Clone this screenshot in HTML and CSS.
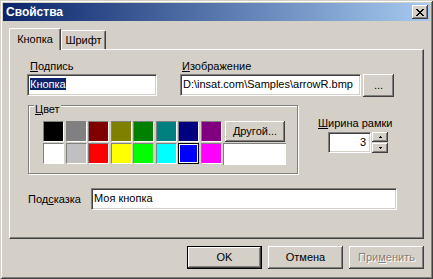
FILE: index.html
```html
<!DOCTYPE html>
<html lang="ru">
<head>
    <meta charset="UTF-8">
    <meta name="viewport" content="width=device-width, initial-scale=1.0">
    <title>Свойства</title>
    <link rel="stylesheet" href="styles.css">
</head>
<body>
  <div class="window">
    <div class="titlebar">
      <span class="title">Свойства</span>
      <div class="btn close-btn">
        <svg width="8" height="7" viewBox="0 0 8 7" shape-rendering="crispEdges">
          <path fill="#000" d="M0 0h2v1H0z M6 0h2v1H6z M1 1h2v1H1z M5 1h2v1H5z M2 2h4v1H2z M3 3h2v1H3z M2 4h4v1H2z M1 5h2v1H1z M5 5h2v1H5z M0 6h2v1H0z M6 6h2v1H6z"/>
        </svg>
      </div>
    </div>
    <div class="client">
      <div class="tabs">
        <div class="tab active">Кнопка</div>
        <div class="tab inactive">Шрифт</div>
      </div>
      <div class="panel">
        <div class="row-top">
          <div class="field caption-field">
            <div class="label"><u>П</u>одпись</div>
            <div class="edit w-caption"><span class="sel">Кнопка</span></div>
          </div>
          <div class="field image-field">
            <div class="label"><u>И</u>зображение</div>
            <div class="edit-line">
              <div class="edit w-image">D:\insat.com\Samples\arrowR.bmp</div>
              <div class="btn browse">...</div>
            </div>
          </div>
        </div>

        <div class="row-mid">
          <div class="group">
            <span class="group-title"><u>Ц</u>вет</span>
            <div class="palette">
              <div class="swatches">
                <div class="swatch c-black"></div>
                <div class="swatch c-gray"></div>
                <div class="swatch c-maroon"></div>
                <div class="swatch c-olive"></div>
                <div class="swatch c-green"></div>
                <div class="swatch c-teal"></div>
                <div class="swatch c-navy"></div>
                <div class="swatch c-purple"></div>
                <div class="swatch c-white"></div>
                <div class="swatch c-silver"></div>
                <div class="swatch c-red"></div>
                <div class="swatch c-yellow"></div>
                <div class="swatch c-lime"></div>
                <div class="swatch c-aqua"></div>
                <div class="swatch c-blue selected"></div>
                <div class="swatch c-fuchsia"></div>
              </div>
              <div class="palette-side">
                <div class="btn other">Другой...</div>
                <div class="custom"></div>
              </div>
            </div>
          </div>

          <div class="border-width">
            <div class="label"><u>Ш</u>ирина рамки</div>
            <div class="spin">
              <div class="edit spin-edit">3</div>
              <div class="spin-btns">
                <div class="btn spin-btn">
                  <svg width="3" height="2" viewBox="0 0 3 2" shape-rendering="crispEdges"><path fill="#000" d="M1 0h1v1h1v1H0V1h1z"/></svg>
                </div>
                <div class="btn spin-btn">
                  <svg width="3" height="2" viewBox="0 0 3 2" shape-rendering="crispEdges"><path fill="#000" d="M0 0h3v1H2v1H1V1H0z"/></svg>
                </div>
              </div>
            </div>
          </div>
        </div>

        <div class="row-hint">
          <div class="label hint-label">Под<u>с</u>казка</div>
          <div class="edit w-hint">Моя кнопка</div>
        </div>
      </div>

      <div class="actions">
        <div class="btn action default">OK</div>
        <div class="btn action">Отмена</div>
        <div class="btn action disabled">При<u>м</u>енить</div>
      </div>
    </div>
  </div>
</body>
</html>
```

FILE: styles.css
```css
*{
    box-sizing: border-box;
}
body{
    margin: 0;
    background: #d4d0c8;
    font: 11px/13px "Liberation Sans", Arial, sans-serif;
    color: #000;
}
.window{
    width: 433px;
    height: 279px;
    padding: 3px;
    background: #d4d0c8;
    box-shadow: inset 1px 1px #d4d0c8, inset -1px -1px #404040, inset 2px 2px #fff, inset -2px -2px #808080;
    display: flex;
    flex-direction: column;
}
.titlebar{
    height: 18px;
    flex: none;
    display: flex;
    justify-content: space-between;
    align-items: flex-start;
    padding: 0 2px 0 3px;
    background: linear-gradient(to right, #0a246a, #a6caf0);
}
.title{
    color: #fff;
    font-weight: bold;
    font-size: 12px;
    line-height: 18px;
}

/* classic raised button */
.btn{
    display: flex;
    align-items: center;
    justify-content: center;
    background: #d4d0c8;
    box-shadow: inset -1px -1px #404040, inset 1px 1px #fff, inset -2px -2px #808080, inset 2px 2px #d4d0c8;
}
.close-btn{
    width: 16px;
    height: 14px;
    margin-top: 2px;
}

.client{
    flex: 1;
    display: flex;
    flex-direction: column;
    padding: 7px 6px 0;
}

/* tabs */
.tabs{
    display: flex;
    align-items: flex-end;
    height: 21px;
}
.tab{
    height: 19px;
    padding-top: 3px;
    text-align: center;
    border-top: 1px solid #fff;
    border-left: 1px solid #fff;
    border-right: 1px solid #404040;
    border-radius: 2px 2px 0 0;
    box-shadow: inset -1px 0 #808080;
}
.tab.active{
    position: relative;
    z-index: 1;
    width: 52px;
    height: 22px;
    margin-bottom: -1px;
    padding-top: 4px;
    background: #d4d0c8;
}
.tab.inactive{
    width: 45px;
}

.panel{
    height: 190px;
    flex: none;
    padding: 10px 0 0 17px;
    border-top: 1px solid #fff;
    border-left: 1px solid #fff;
    border-right: 1px solid #404040;
    border-bottom: 1px solid #404040;
    box-shadow: inset -1px -1px #808080;
}

/* text fields */
.label{
    height: 13px;
    white-space: nowrap;
}
.caption-field .label{
    padding-left: 3px;
}
.image-field .label{
    padding-left: 2px;
}
.edit{
    height: 22px;
    margin-top: 1px;
    padding: 3px 2px 0;
    background: #fff;
    border: 1px solid;
    border-color: #808080 #fff #fff #808080;
    box-shadow: inset 1px 1px #404040, inset -1px -1px #d4d0c8;
    white-space: nowrap;
    overflow: hidden;
}
.sel{
    background: #0a246a;
    color: #fff;
}
.row-top{
    display: flex;
    gap: 23px;
}
.w-caption{
    width: 130px;
}
.edit-line{
    display: flex;
    gap: 2px;
}
.w-image{
    width: 181px;
}
.browse{
    width: 31px;
    height: 23px;
    margin-top: 1px;
}

/* colour group */
.row-mid{
    display: flex;
    margin: 8px 0 0 1px;
}
.group{
    position: relative;
    width: 270px;
    height: 69px;
    padding: 15px 0 0 14px;
    border: 1px solid #808080;
    box-shadow: inset 1px 1px #fff, 1px 1px #fff;
}
.group-title{
    position: absolute;
    top: -3px;
    left: 5px;
    padding: 0 1px;
    background: #d4d0c8;
}
.palette{
    display: flex;
}
.swatches{
    display: grid;
    grid-template-columns: repeat(8, 21px);
    grid-auto-rows: 21px;
    column-gap: 1.5px;
    row-gap: 1px;
}
.swatch{
    border: 1px solid;
    border-color: #808080 #fff #fff #808080;
}
.swatch.selected{
    border-color: #000;
    box-shadow: inset 0 0 0 1px #fff;
}
.c-black{ background: #000; }
.c-gray{ background: #808080; }
.c-maroon{ background: #800000; }
.c-olive{ background: #808000; }
.c-green{ background: #008000; }
.c-teal{ background: #008080; }
.c-navy{ background: #000080; }
.c-purple{ background: #800080; }
.c-white{ background: #fff; }
.c-silver{ background: #c0c0c0; }
.c-red{ background: #f00; }
.c-yellow{ background: #ff0; }
.c-lime{ background: #0f0; }
.c-aqua{ background: #0ff; }
.c-blue{ background: #00f; }
.c-fuchsia{ background: #f0f; }
.palette-side{
    display: flex;
    flex-direction: column;
    gap: 1px;
    margin-left: 1.5px;
}
.other{
    width: 60px;
    height: 21px;
    margin-left: 2px;
}
.custom{
    width: 63px;
    height: 22px;
    background: #fff;
    border-top: 1px solid #808080;
    border-left: 1px solid #808080;
}

/* border width spinner */
.border-width{
    margin-left: 20px;
    padding-top: 12px;
}
.spin{
    display: flex;
    gap: 1px;
    margin: 2px 0 0 10px;
}
.spin-edit{
    width: 43px;
    height: 21px;
    margin-top: 0;
    text-align: right;
    padding: 3px 4px 0 0;
}
.spin-btns{
    display: flex;
    flex-direction: column;
    gap: 1px;
}
.spin-btn{
    width: 16px;
    height: 10px;
}

/* hint row */
.row-hint{
    display: flex;
    align-items: center;
    margin: 14px 0 0 1px;
}
.hint-label{
    width: 63px;
}
.w-hint{
    width: 306px;
    margin-top: 0;
}

/* dialog buttons */
.actions{
    display: flex;
    justify-content: flex-end;
    gap: 6px;
    margin-top: 7px;
}
.action{
    width: 75px;
    height: 23px;
    padding-bottom: 1px;
}
.default{
    border: 1px solid #000;
}
.disabled{
    color: #808080;
    text-shadow: 1px 1px #fff;
}
```
